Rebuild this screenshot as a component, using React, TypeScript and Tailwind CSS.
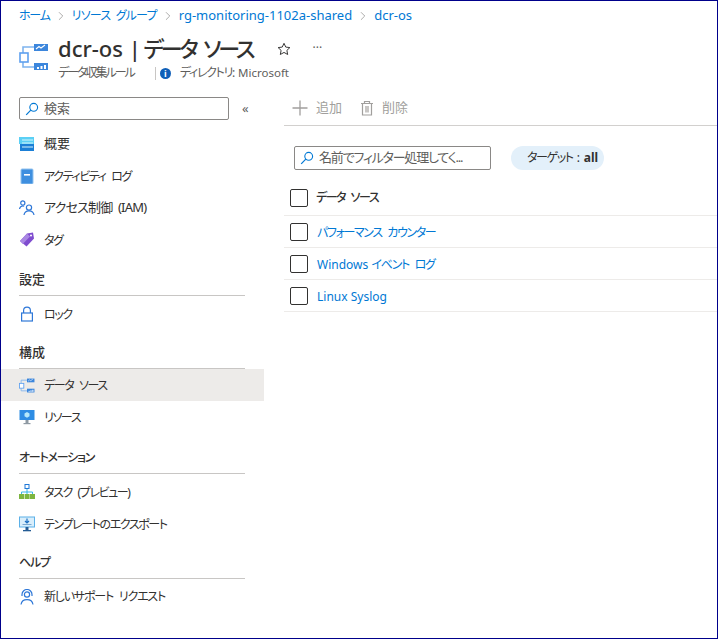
import React from "react";
import { ChevronRight } from "lucide-react";

const KANA_LOW = "pt-[1px] text-[12px] tracking-[-1.400px] [word-spacing:4px]";

function ResourceIcon({ className }: { className?: string }) {
  return (
    <svg viewBox="0 0 30 28" className={className}>
      <path d="M4 10V4h11M4 19v5h11" fill="none" stroke="#7fb4ee" strokeWidth="1.6" />
      <rect x="1" y="10" width="8" height="9" fill="#fff" stroke="#5ea0ef" strokeWidth="1.6" />
      <rect x="15" y="1" width="14" height="7" fill="#3c86dc" />
      <path d="M17 6l3-2.500 2 1.500 4-3" fill="none" stroke="#fff" strokeWidth="1.1" />
      <rect x="15" y="20" width="14" height="7" fill="#3c86dc" />
      <rect x="18" y="24" width="2" height="2" fill="#fff" />
      <rect x="21.500" y="23" width="2" height="3" fill="#fff" />
      <rect x="25" y="22" width="2" height="4" fill="#fff" />
    </svg>
  );
}

function SearchIcon() {
  return (
    <svg viewBox="0 0 14 14" className="h-[14px] w-[14px] shrink-0">
      <circle cx="8.7" cy="5.3" r="3.9" fill="none" stroke="#0078d4" strokeWidth="1.1" />
      <path d="M5.8 8.1L1.2 12.8" stroke="#0078d4" strokeWidth="1.2" />
    </svg>
  );
}

function OverviewIcon() {
  return (
    <svg viewBox="0 0 16 16" className="h-4 w-4">
      <rect x="0" y="1" width="15" height="7" fill="#5bd0f5" />
      <rect x="1" y="8" width="14" height="7" fill="#1b7fd6" />
      <path d="M3 4h11M3 7h11M3 11h11" stroke="#d6f3fc" strokeWidth="1.1" />
    </svg>
  );
}

function ActivityIcon() {
  return (
    <svg viewBox="0 0 16 16" className="h-4 w-4">
      <rect x="2" y="1" width="12" height="15" rx="1" fill="#3f8fdf" />
      <rect x="2" y="1" width="12" height="15" rx="1" fill="none" stroke="#93c3ef" />
      <rect x="5" y="6" width="6" height="1.600" fill="#fff" />
    </svg>
  );
}

function IamIcon() {
  return (
    <svg viewBox="0 0 16 16" className="h-4 w-4" fill="none" stroke="#2f78d8" strokeWidth="1.2">
      <circle cx="3.800" cy="3" r="2.100" />
      <path d="M0.500 9c.4-2 1.500-3 3.300-3 .6 0 1 .1 1.400.3" />
      <circle cx="10" cy="7.600" r="2.600" />
      <path d="M5 15c.4-2.800 2.300-4.200 5-4.200s4.600 1.400 5 4.200" />
    </svg>
  );
}

function TagIcon() {
  return (
    <svg viewBox="0 0 16 16" className="h-4 w-4">
      <path d="M1 9l7-7.500L14 0.500l1 6-7.500 8z" fill="#7f4ccf" />
      <path d="M1 9l7-7.500 3 3-7.200 7.400z" fill="#a987e3" />
      <circle cx="12" cy="3.500" r="1" fill="#fff" />
    </svg>
  );
}

function LockIcon() {
  return (
    <svg viewBox="0 0 16 16" className="h-4 w-4" fill="none" stroke="#2f78d8" strokeWidth="1.2">
      <rect x="2.600" y="7" width="10.800" height="8" />
      <path d="M4.600 7V4.600a3.400 3.400 0 0 1 6.800 0V7" />
    </svg>
  );
}

function MonitorIcon() {
  return (
    <svg viewBox="0 0 16 16" className="h-4 w-4">
      <rect x="0.500" y="1" width="15" height="10" fill="#2e8de4" />
      <path d="M8 3l2.500 1.400v2.900L8 8.700 5.500 7.300V4.400z" fill="#b5e9fb" />
      <rect x="6.500" y="11" width="3" height="3" fill="#8f9aa3" />
      <rect x="4.500" y="14" width="7" height="1.200" fill="#8f9aa3" />
    </svg>
  );
}

function TaskIcon() {
  return (
    <svg viewBox="0 0 16 16" className="h-4 w-4">
      <rect x="6" y="0.500" width="4" height="4" fill="#fff" stroke="#1f78d8" />
      <path d="M8 5v3M2.500 10V8h11v2M8 8v2" fill="none" stroke="#38b7e8" />
      <rect x="0" y="10" width="5" height="5" fill="#7db540" />
      <rect x="5.600" y="10" width="5" height="5" fill="#7db540" />
      <rect x="11" y="10" width="5" height="5" fill="#7db540" />
    </svg>
  );
}

function ExportIcon() {
  return (
    <svg viewBox="0 0 16 16" className="h-4 w-4">
      <rect x="0.500" y="1" width="15" height="10" fill="#d9eefb" stroke="#5bb0e8" />
      <path d="M8 2.500v4M6 5l2 2 2-2" fill="none" stroke="#1b6fc2" strokeWidth="1.2" />
      <rect x="3.500" y="8" width="9" height="1" fill="#7aa8d0" />
      <rect x="6.500" y="11" width="3" height="3" fill="#245c94" />
      <rect x="4" y="14" width="8" height="1.300" fill="#245c94" />
    </svg>
  );
}

function SupportIcon() {
  return (
    <svg viewBox="0 0 16 16" className="h-4 w-4" fill="none" stroke="#2f78d8" strokeWidth="1.2">
      <circle cx="8" cy="5.500" r="2.600" />
      <path d="M3 7V5.500a5 5 0 0 1 10 0V7" />
      <path d="M2 15.500c.5-3 2.600-4.800 6-4.800s5.500 1.800 6 4.800" />
    </svg>
  );
}

function Checkbox() {
  return <span className="h-[18px] w-[18px] shrink-0 rounded-[2px] border border-[#323130] bg-white" />;
}

function NavItem({ icon, label, active, text = "pt-[2px] text-[12px] tracking-[-1.400px] [word-spacing:4px]" }: {
  icon: React.ReactNode;
  label: string;
  active?: boolean;
  text?: string;
}) {
  return (
    <div className={`flex h-8 items-center pl-[18px] ${active ? "bg-[#edebe9]" : ""}`}>
      <span className="flex w-[25px] shrink-0 items-center">{icon}</span>
      <span className={`text-[#323130] ${text}`}>{label}</span>
    </div>
  );
}

function NavGroup({ title, className, text = "text-[12px] tracking-[-1.200px]", children }: {
  title: string;
  className: string;
  text?: string;
  children: React.ReactNode;
}) {
  return (
    <div className={className}>
      <div className={`mr-[19px] ml-[18px] flex h-[32px] items-center border-b border-[#c8c6c4] font-medium text-[#323130] ${text}`}>
        {title}
      </div>
      {children}
    </div>
  );
}

function Row({ children }: { children: React.ReactNode }) {
  return (
    <div className="flex h-8 items-center border-b border-[#edebe9] pl-[6px]">
      <Checkbox />
      <span className="ml-[9px] pt-[3px] text-[12px] text-[#0078d4]">{children}</span>
    </div>
  );
}

export default function App() {
  return (
    <div className="flex h-[639px] w-[718px] flex-col overflow-hidden border border-[#00008b] bg-white font-['Noto_Sans','Noto_Sans_CJK_JP',sans-serif] [font-feature-settings:'palt']">
      {/* Breadcrumb */}
      <div className="flex h-[29px] shrink-0 items-center pl-[18px] text-[13px] text-[#0078d4]">
        <span className="text-[12px] tracking-[-1.200px]">ホーム</span>
        <ChevronRight className="mx-[4px] h-[14px] w-[14px] text-[#8a8886]" strokeWidth={1.2} />
        <span className="text-[12px] tracking-[-0.800px] [word-spacing:3px]">リソース グループ</span>
        <ChevronRight className="mx-[4px] h-[14px] w-[14px] text-[#8a8886]" strokeWidth={1.2} />
        <span>rg-monitoring-1102a-shared</span>
        <ChevronRight className="mx-[4px] h-[14px] w-[14px] text-[#8a8886]" strokeWidth={1.2} />
        <span>dcr-os</span>
      </div>

      {/* Title */}
      <div className="flex h-[55px] shrink-0 pl-[18px]">
        <ResourceIcon className="mt-[13px] h-[28px] w-[30px] shrink-0" />
        <div className="ml-[9px]">
          <div className="flex h-[35px] items-center">
            <span className="text-[22px] leading-none font-medium text-[#323130]">
              dcr-os | <span className="-ml-[3px] tracking-[-3.100px] [word-spacing:5px]">データ ソース</span>
            </span>
            <svg viewBox="0 0 16 16" className="mt-[3px] ml-[24px] h-[14px] w-[14px]" fill="none" stroke="#323130" strokeWidth="1.1">
              <path d="M8 1.500l2 4.300 4.700.6-3.400 3.200.9 4.700L8 11.900l-4.200 2.400.9-4.700L1.300 6.400 6 5.800z" />
            </svg>
            <span className="ml-[22px] text-[12px] leading-none text-[#605e5c]">···</span>
          </div>
          <div className="-mt-[1px] flex items-center text-[12px] text-[#605e5c]">
            <span className="tracking-[-2px]">データ収集ルール</span>
            <span className="ml-[21px] h-[13px] w-px bg-[#c8c6c4]" />
            <span className="ml-[4px] flex h-[11px] w-[11px] items-center justify-center rounded-full bg-[#0f5fb8] text-[9px] leading-none font-bold text-white">i</span>
            <span className="ml-[9px] tracking-[-1.300px]">ディレクトリ:</span>
            <span className="ml-[4px] text-[11.500px]">Microsoft</span>
          </div>
        </div>
      </div>

      <div className="flex min-h-0 flex-1">
        {/* Sidebar */}
        <aside className="w-[263px] shrink-0">
          <div className="flex h-[43px] items-start pt-[12px] pl-[18px]">
            <div className="flex h-[23px] w-[210px] items-center gap-[5px] rounded-[2px] border border-[#8a8886] pl-[5px] text-[13px] text-[#605e5c]">
              <SearchIcon />
              <span>検索</span>
            </div>
            <span className="ml-[13px] text-[13px] leading-[22px] text-[#605e5c]">«</span>
          </div>
          <NavItem icon={<OverviewIcon />} label="概要" text="text-[13px]" />
          <NavItem icon={<ActivityIcon />} label="アクティビティ ログ" />
          <NavItem icon={<IamIcon />} label="アクセス制御 (IAM)" text="text-[13px] tracking-[-0.800px] [word-spacing:3px]" />
          <NavItem icon={<TagIcon />} label="タグ" />
          <NavGroup title="設定" className="mt-[8px]" text="text-[13px]">
            <div className="pt-[2px]">
              <NavItem icon={<LockIcon />} label="ロック" text={KANA_LOW} />
            </div>
          </NavGroup>
          <NavGroup title="構成" className="mt-[7px]" text="text-[13px]">
            <NavItem icon={<ResourceIcon className="h-[15px] w-[16px]" />} label="データ ソース" active />
            <NavItem icon={<MonitorIcon />} label="リソース" />
          </NavGroup>
          <NavGroup title="オートメーション" className="mt-[9px]">
            <div className="pt-[2px]">
              <NavItem icon={<TaskIcon />} label="タスク (プレビュー)" text={KANA_LOW} />
              <NavItem icon={<ExportIcon />} label="テンプレートのエクスポート" text={KANA_LOW} />
            </div>
          </NavGroup>
          <NavGroup title="ヘルプ" className="mt-[7px]">
            <div className="pt-[2px]">
              <NavItem icon={<SupportIcon />} label="新しいサポート リクエスト" text="text-[12px] tracking-[-1.200px] [word-spacing:4px]" />
            </div>
          </NavGroup>
        </aside>

        {/* Main */}
        <main className="min-w-0 flex-1 pl-[20px]">
          <div className="flex h-[41px] items-center border-b border-[#d2d0ce] pt-[5px] text-[13px] text-[#a19f9d]">
            <svg viewBox="0 0 16 16" className="ml-[8px] h-4 w-4" stroke="#a19f9d" strokeWidth="1.3">
              <path d="M8 0.500v15M0.500 8h15" />
            </svg>
            <span className="ml-[8px]">追加</span>
            <svg viewBox="0 0 16 16" className="ml-[17px] h-4 w-4" fill="none" stroke="#a19f9d" strokeWidth="1.2">
              <path d="M2 3.500h12M5.500 3.500V1.500h5v2M3.500 3.500v11.500h9V3.500" />
              <path d="M6 6v6.500h4V6z" fill="#c8c6c4" stroke="none" />
            </svg>
            <span className="ml-[7px]">削除</span>
          </div>
          <div className="flex items-center pt-[20px] pl-[10px]">
            <div className="flex h-[24px] w-[197px] items-center gap-[5px] rounded-[2px] border border-[#8a8886] pl-[5px] text-[13px] tracking-[-1.200px] text-[#605e5c]">
              <SearchIcon />
              <span>名前でフィルター処理してく...</span>
            </div>
            <div className="ml-[20px] flex h-[24px] w-[93px] items-center rounded-full bg-[#e3f0fa] pl-[16px] text-[12px] text-[#323130]">
              <span className="tracking-[-1.400px]">ターゲット</span>
              <span className="ml-[4px]">:</span>
              <span className="ml-[4px] font-bold">all</span>
            </div>
          </div>
          <div className="mt-[10px] flex h-[36px] items-center border-b border-[#edebe9] pl-[6px]">
            <Checkbox />
            <span className="ml-[8px] text-[12px] font-medium tracking-[-1.500px] [word-spacing:4px] text-[#323130]">データ ソース</span>
          </div>
          <Row><span className="tracking-[-1.400px] [word-spacing:4px]">パフォーマンス カウンター</span></Row>
          <Row>Windows <span className="tracking-[-1.300px] [word-spacing:4px]">イベント ログ</span></Row>
          <Row>Linux Syslog</Row>
        </main>
      </div>
    </div>
  );
}
